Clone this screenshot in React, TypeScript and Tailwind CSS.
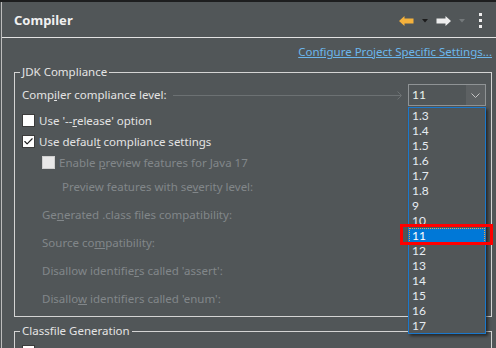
import { Check } from "lucide-react";

const VERSIONS = ["1.3", "1.4", "1.5", "1.6", "1.7", "1.8", "9", "10", "11", "12", "13", "14", "15", "16", "17"];

const Box = ({ checked = false, disabled = false }: { checked?: boolean; disabled?: boolean }) => (
  <span
    className={`flex items-center justify-center w-[13px] h-[13px] shrink-0 border ${
      disabled ? "bg-[#e8e8e8] border-[#cfcfcf]" : "bg-[#ffffff] border-[#3c3c3c]"
    }`}
  >
    {checked && <Check className="w-[11px] h-[11px] text-[#1f1f1f]" strokeWidth={2.5} />}
  </span>
);

const Arrow = ({ dir, fill }: { dir: "left" | "right"; fill: string }) => (
  <svg width="15" height="10" viewBox="0 0 15 10" className={dir === "right" ? "-scale-x-100" : ""}>
    <path d="M0 5 L5.5 0 V2.5 H14.5 V7.5 H5.5 V10 Z" fill={fill} />
  </svg>
);

const Tri = ({ color }: { color: string }) => (
  <svg width="6" height="4" viewBox="0 0 6 4">
    <path d="M0 0 H6 L3 3.5 Z" fill={color} />
  </svg>
);

export default function App() {
  return (
    <div className="w-[496px] h-[348px] overflow-hidden bg-[#515658] border-t-2 border-[#1d1e1f] font-['Noto_Sans','Open_Sans',sans-serif] text-[11.5px] text-[#e4e4e4]">
      <div className="h-full ml-px border-l border-[#bdbdbd]">
        {/* Header */}
        <div className="h-[36px] pt-[2px] flex items-center justify-between pl-[12px] pr-[14px] border-b border-[#e2e2e2]">
          <span className="font-bold text-[13px] text-[#f0f0f0]">Compiler</span>
          <div className="flex items-center">
            <Arrow dir="left" fill="#f4b13c" />
            <span className="ml-[8px]">
              <Tri color="#1c1c1c" />
            </span>
            <span className="ml-[8px]">
              <Arrow dir="right" fill="#ededed" />
            </span>
            <span className="ml-[8px]">
              <Tri color="#74797b" />
            </span>
            <span className="ml-[14px] flex flex-col gap-[3px]">
              <span className="w-[3px] h-[3px] bg-[#eeeeee]" />
              <span className="w-[3px] h-[3px] bg-[#eeeeee]" />
              <span className="w-[3px] h-[3px] bg-[#eeeeee]" />
            </span>
          </div>
        </div>

        {/* Link */}
        <div className="mt-[6px] h-[16px] leading-[16px] flex justify-end pr-[4px]">
          <span className="text-[#6cb6ec] underline">Configure Project Specific Settings...</span>
        </div>

        {/* JDK Compliance */}
        <fieldset className="mt-[4px] ml-[12px] mr-[4px] border border-[#d4d4d4]">
          <legend className="ml-[5px] px-[2px] leading-[16px]">JDK Compliance</legend>
          <div className="pl-[7px] pr-[5px] pb-[3px]">
            <div className="mt-[4px] h-[22px] flex items-center">
              <span>
                Comp<u>i</u>ler compliance level:
              </span>
              <div className="flex-1 flex items-center ml-[6px] mr-[6px]">
                <span className="flex-1 h-px bg-[#6c7173]" />
                <svg width="5" height="9" viewBox="0 0 5 9" className="-ml-[4px]">
                  <path d="M0.5 0.5 L4.5 4.5 L0.5 8.5" stroke="#6c7173" fill="none" />
                </svg>
              </div>
              <div className="relative w-[78px] h-[22px] border border-[#8f9395] flex">
                <span className="flex-1 pl-[3px] leading-[20px] font-['Lato',sans-serif] text-[12px] text-[#ecf4ec]">11</span>
                <span className="w-[19px] h-full bg-[#5d6163] flex items-center justify-center">
                  <svg width="9" height="5" viewBox="0 0 9 5">
                    <path d="M0.5 0.5 L4.5 4.5 L8.5 0.5" stroke="#c4c4c4" fill="none" />
                  </svg>
                </span>

                {/* Open list */}
                <div className="absolute -left-px top-[22px] w-[78px] h-[227px] border border-[#1a78cc] bg-[#515658] shadow-[2px_2px_3px_rgba(0,0,0,0.55)] z-10 font-['Lato',sans-serif] text-[12px]">
                  {VERSIONS.map((v) =>
                    v === "11" ? (
                      <div key={v} className="h-[15px] bg-[#0078d7] border border-dotted border-[#f0a640] pl-[2px] leading-[13px] text-[#ffffff]">
                        {v}
                      </div>
                    ) : (
                      <div key={v} className="h-[15px] pl-[3px] leading-[15px] text-[#e6ecf2]">
                        {v}
                      </div>
                    )
                  )}
                </div>
                <div className="absolute -left-[9px] top-[139px] w-[93px] h-[21px] border-[3px] border-[#ff0000] z-20" />
              </div>
            </div>

            <div className="mt-[4px] h-[21px] flex items-center gap-[4px]">
              <Box />
              <span>
                Use '--<u>r</u>elease' option
              </span>
            </div>
            <div className="h-[21px] flex items-center gap-[4px]">
              <Box checked />
              <span>
                Use defaul<u>t</u> compliance settings
              </span>
            </div>
            <div className="h-[21px] flex items-center gap-[4px] ml-[20px] text-[#82878a]">
              <Box disabled />
              <span>
                Enable <u>p</u>review features for Java 17
              </span>
            </div>
            <div className="h-[28px] flex items-center ml-[40px] text-[#82878a]">
              <span>
                Preview features with se<u>v</u>erity level:
              </span>
            </div>
            <div className="h-[28px] flex items-center ml-[20px] text-[#82878a]">
              <span>
                Ge<u>n</u>erated .class files compatibility:
              </span>
            </div>
            <div className="h-[28px] flex items-center ml-[20px] text-[#82878a]">
              <span>
                Source co<u>m</u>patibility:
              </span>
            </div>
            <div className="h-[28px] flex items-center ml-[20px] text-[#82878a]">
              <span>
                Disallow identifie<u>r</u>s called 'assert':
              </span>
            </div>
            <div className="h-[28px] flex items-center ml-[20px] text-[#82878a]">
              <span>
                Disallo<u>w</u> identifiers called 'enum':
              </span>
            </div>
          </div>
        </fieldset>

        {/* Classfile Generation */}
        <fieldset className="mt-[6px] ml-[12px] mr-[4px] border border-[#d4d4d4]">
          <legend className="ml-[5px] px-[2px] leading-[16px]">Classfile Generation</legend>
          <div className="pl-[7px] pr-[5px]">
            <div className="mt-[2px] h-[21px] flex items-center gap-[4px]">
              <Box checked />
              <span>Add variable attributes to generated class files (used by the debugger)</span>
            </div>
          </div>
        </fieldset>
      </div>
    </div>
  );
}
